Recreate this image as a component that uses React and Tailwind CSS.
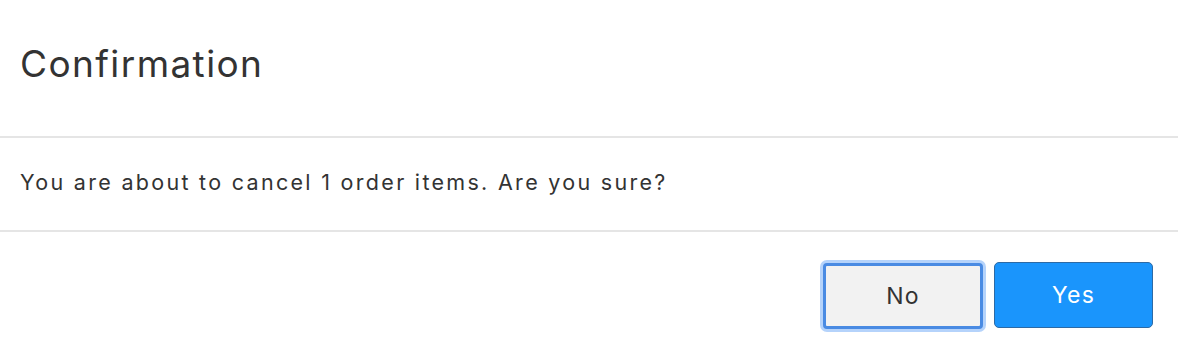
export default function App() {
  return (
    <div className="w-[1178px] h-[356px] bg-white text-[#333] font-['Inter',sans-serif]">
      {/* Header */}
      <div className="h-[138px] border-b-2 border-[#e5e5e5] px-5 flex items-center">
        <h3 className="text-[37px] leading-none font-normal tracking-[1.4px] -mt-[10px]">Confirmation</h3>
      </div>

      {/* Body */}
      <div className="h-[94px] border-b-2 border-[#e5e5e5] px-5 flex items-center">
        <p className="text-[21.5px] leading-none tracking-[2.3px] -mt-[2px]">You are about to cancel 1 order items. Are you sure?</p>
      </div>

      {/* Footer */}
      <div className="flex justify-end items-start gap-[11px] pt-[30px] pr-[25px]">
        <button className="w-[160px] h-[66px] bg-[#f2f2f2] text-[#333] text-[23px] tracking-[1.2px] rounded-[4px] border-[3px] border-[#4a8be3] ring-[3px] ring-[#b5d3fb] mt-[1px]">
          No
        </button>
        <button className="w-[159px] h-[66px] bg-[#1a95fc] text-white text-[23px] tracking-[1.2px] rounded-[5px] border border-[#2d6aa5]">
          Yes
        </button>
      </div>
    </div>
  );
}
